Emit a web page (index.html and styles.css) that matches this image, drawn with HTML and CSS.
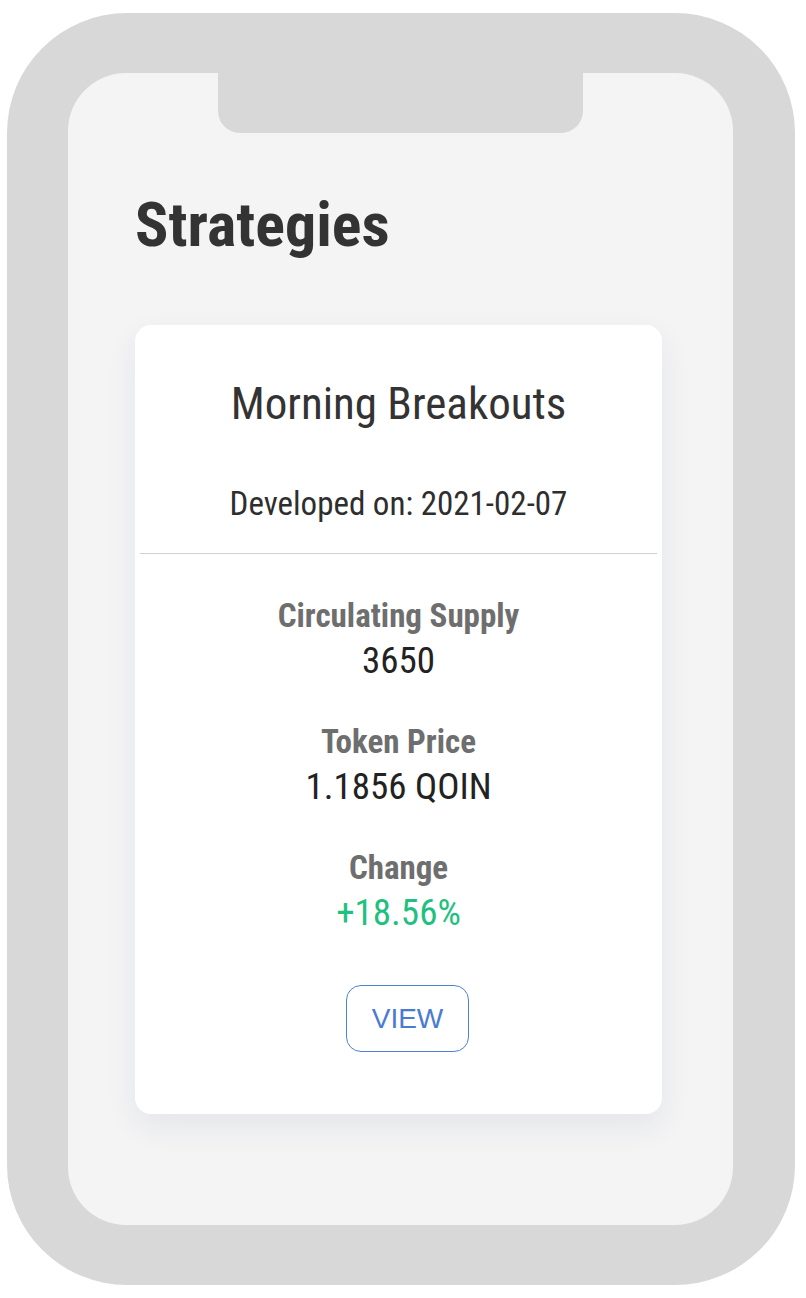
FILE: index.html
```html
<!DOCTYPE html>
<html lang="en">
<head>
<meta charset="utf-8">
<title>Strategies</title>
<link rel="stylesheet" href="styles.css">
</head>
<body>
<div class="phone">
  <div class="screen">
    <div class="notch"></div>
    <h1 class="title">Strategies</h1>
    <div class="card">
      <div class="card-name">Morning Breakouts</div>
      <div class="card-date">Developed on: 2021-02-07</div>
      <hr class="divider">
      <div class="stat">
        <div class="stat-label">Circulating Supply</div>
        <div class="stat-value">3650</div>
      </div>
      <div class="stat">
        <div class="stat-label">Token Price</div>
        <div class="stat-value">1.1856 QOIN</div>
      </div>
      <div class="stat">
        <div class="stat-label">Change</div>
        <div class="stat-value positive">+18.56%</div>
      </div>
      <button class="view-btn" type="button">VIEW</button>
    </div>
  </div>
</div>
</body>
</html>
```
FILE: styles.css
```css
* { box-sizing: border-box; }

html, body {
  margin: 0;
  padding: 0;
  background: #ffffff;
}

body {
  font-family: "Roboto Condensed", Roboto, "Liberation Sans", sans-serif;
  font-stretch: condensed;
}

.phone {
  margin: 13px 0 0 7px;
  width: 788px;
  height: 1272px;
  padding: 60px 62px 60px 61px;
  background: #d8d8d8;
  border-radius: 120px;
}

.screen {
  position: relative;
  height: 100%;
  background: #f4f4f5;
  border-radius: 58px;
  padding: 121px 71px 0 67px;
}

.notch {
  position: absolute;
  top: 0;
  left: 150px;
  width: 365px;
  height: 60px;
  background: #d8d8d8;
  border-radius: 0 0 22px 22px;
}

.title {
  margin: 0;
  font-size: 62px;
  line-height: 62px;
  font-weight: 700;
  color: #333333;
}

.card {
  margin-top: 69px;
  background: #ffffff;
  border-radius: 16px;
  box-shadow: 0 12px 32px rgba(30, 40, 90, 0.07);
  padding: 53px 0 62px;
  display: flex;
  flex-direction: column;
  align-items: center;
  text-align: center;
}

.card-name {
  font-size: 45px;
  line-height: 52px;
  font-weight: 400;
  color: #333333;
}

.card-date {
  margin-top: 54px;
  font-size: 33px;
  line-height: 40px;
  font-weight: 400;
  color: #2e2e2e;
}

.divider {
  align-self: stretch;
  margin: 29px 5px 0;
  border: 0;
  height: 1px;
  background: #d0d0d0;
}

.stat {
  margin-top: 41px;
  display: flex;
  flex-direction: column;
  align-items: center;
}

.divider + .stat { margin-top: 43px; }

.stat-label {
  font-size: 33px;
  line-height: 38px;
  font-weight: 700;
  color: #6e6e6e;
}

.stat-value {
  margin-top: 5px;
  font-size: 37px;
  line-height: 42px;
  font-weight: 400;
  color: #222222;
}

.stat-value.positive {
  color: #1fc080;
}

.view-btn {
  margin: 51px 0 0 18px;
  width: 123px;
  height: 67px;
  padding: 0;
  background: #ffffff;
  border: 1.5px solid #4e80d6;
  border-radius: 15px;
  font-family: "Liberation Sans", Arial, sans-serif;
  font-stretch: normal;
  font-size: 28px;
  color: #4a7bd3;
  cursor: pointer;
}
```
